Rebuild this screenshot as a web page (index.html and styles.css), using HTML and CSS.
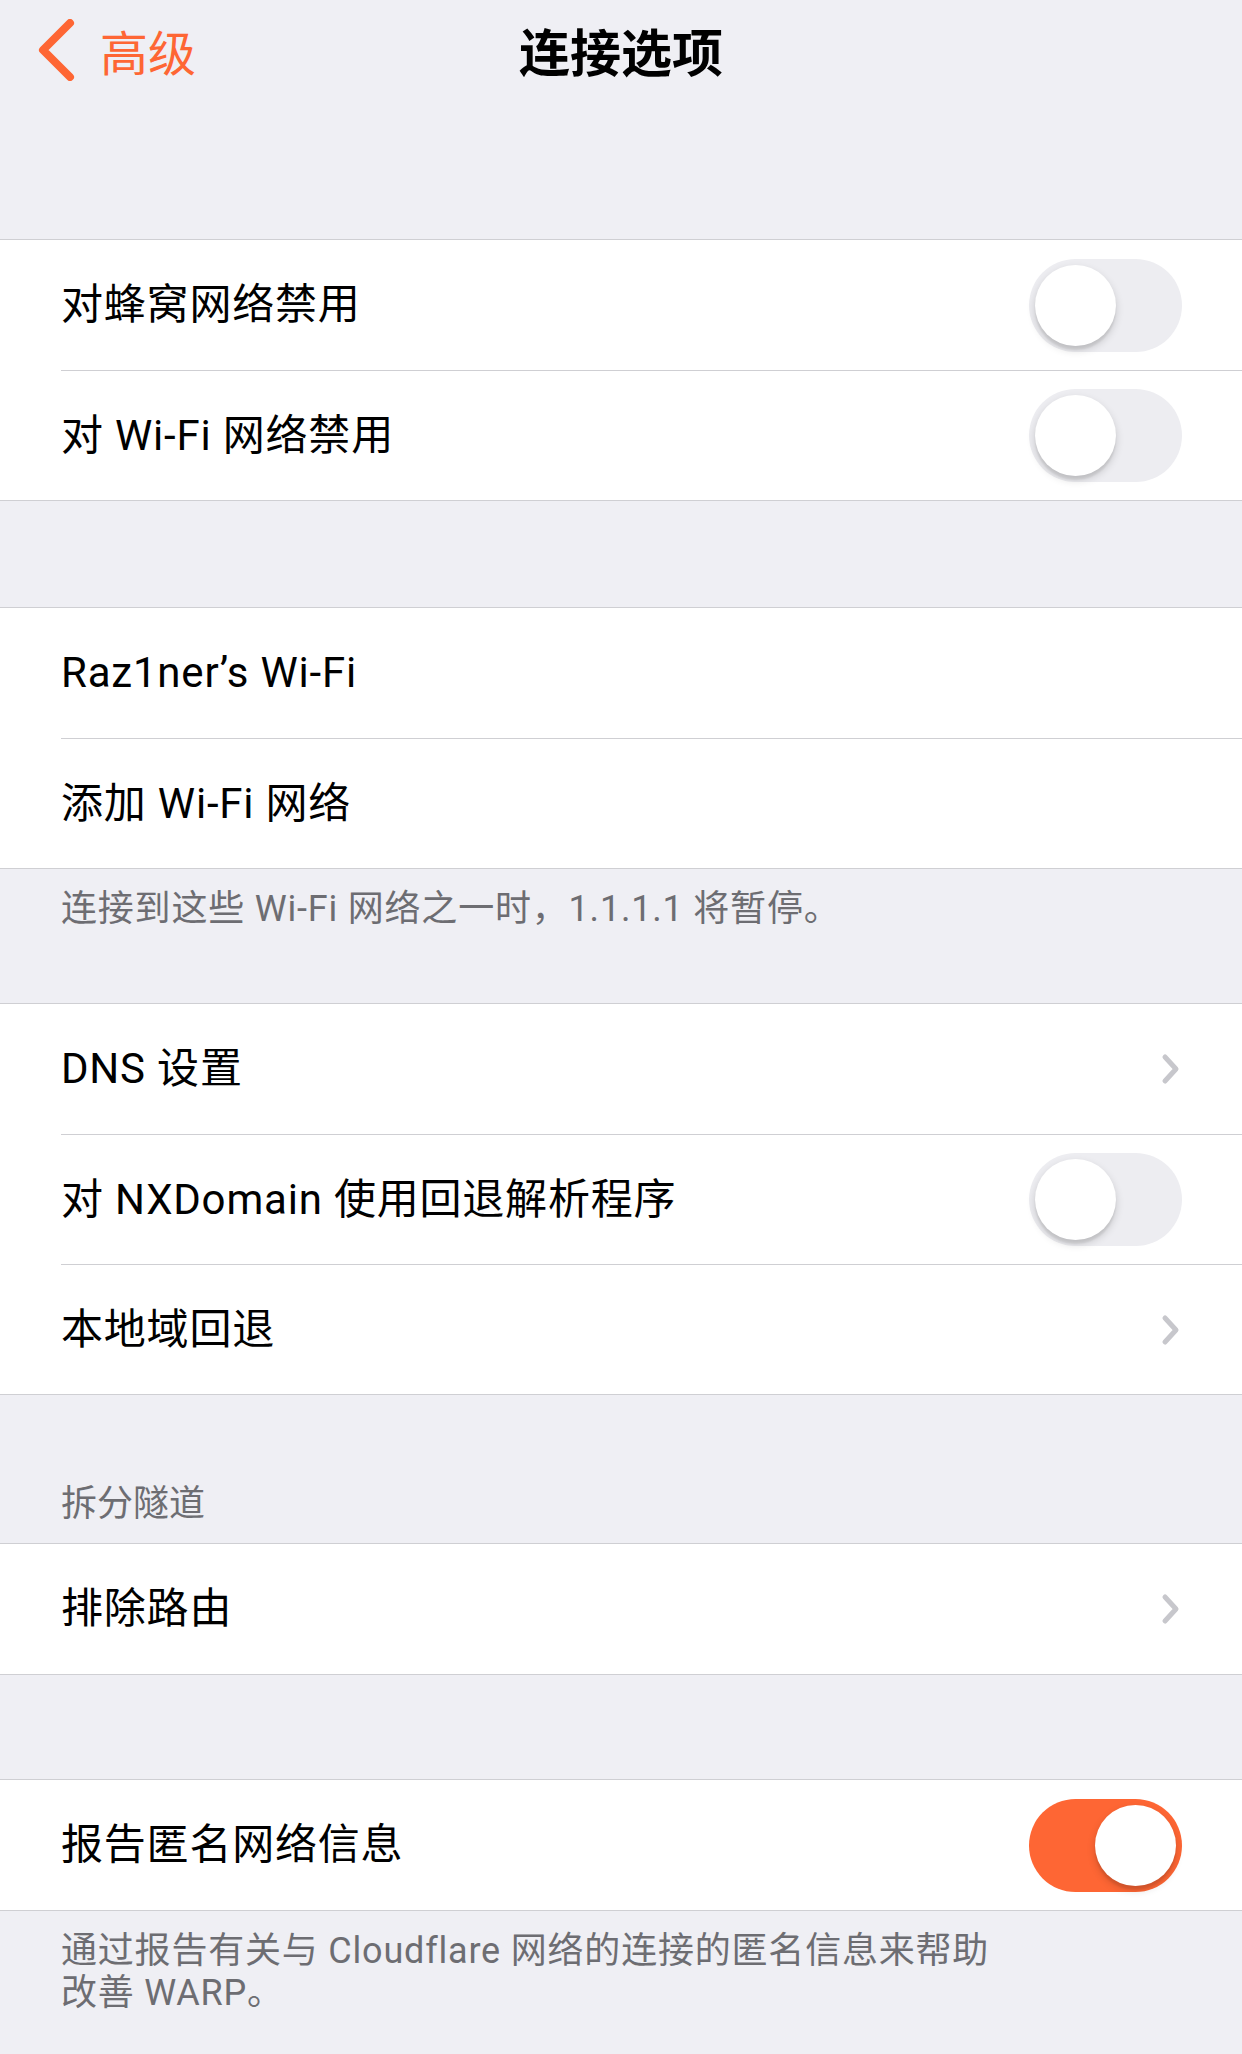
FILE: index.html
```html
<!DOCTYPE html>
<html lang="zh-CN">
<head>
<meta charset="utf-8">
<title>连接选项</title>
<link rel="stylesheet" href="styles.css">
</head>
<body>
<div class="screen">
  <header class="nav">
    <div class="nav-left">
      <svg class="back-chevron" width="40" height="62" viewBox="0 0 40 62"><polyline points="34,4 7,31 34,58" fill="none" stroke="#FE6634" stroke-width="8" stroke-linecap="round" stroke-linejoin="round"/></svg>
      <span class="back-label">高级</span>
    </div>
    <div class="nav-title">连接选项</div>
    <div class="nav-right"></div>
  </header>

  <section class="group g-first">
    <div class="row"><div class="row-inner"><span class="label">对蜂窝网络禁用</span><span class="switch"><span class="knob"></span></span></div></div>
    <div class="row"><div class="row-inner"><span class="label">对 Wi-Fi 网络禁用</span><span class="switch"><span class="knob"></span></span></div></div>
  </section>

  <section class="group g-gap">
    <div class="row"><div class="row-inner"><span class="label">Raz1ner’s Wi-Fi</span></div></div>
    <div class="row"><div class="row-inner"><span class="label">添加 Wi-Fi 网络</span></div></div>
  </section>
  <p class="footer f-1">连接到这些 Wi-Fi 网络之一时，1.1.1.1 将暂停。</p>

  <section class="group g-after-footer">
    <div class="row"><div class="row-inner"><span class="label">DNS 设置</span><svg class="chev" width="22" height="34" viewBox="0 0 22 34"><polyline points="5,5 16,17 5,29" fill="none" stroke="#C7C7CC" stroke-width="5" stroke-linecap="round" stroke-linejoin="round"/></svg></div></div>
    <div class="row"><div class="row-inner"><span class="label">对 NXDomain 使用回退解析程序</span><span class="switch"><span class="knob"></span></span></div></div>
    <div class="row"><div class="row-inner"><span class="label">本地域回退</span><svg class="chev" width="22" height="34" viewBox="0 0 22 34"><polyline points="5,5 16,17 5,29" fill="none" stroke="#C7C7CC" stroke-width="5" stroke-linecap="round" stroke-linejoin="round"/></svg></div></div>
  </section>

  <h2 class="section-header">拆分隧道</h2>
  <section class="group g-after-header">
    <div class="row"><div class="row-inner"><span class="label">排除路由</span><svg class="chev" width="22" height="34" viewBox="0 0 22 34"><polyline points="5,5 16,17 5,29" fill="none" stroke="#C7C7CC" stroke-width="5" stroke-linecap="round" stroke-linejoin="round"/></svg></div></div>
  </section>

  <section class="group g-gap g-last">
    <div class="row"><div class="row-inner"><span class="label">报告匿名网络信息</span><span class="switch on"><span class="knob"></span></span></div></div>
  </section>
  <p class="footer f-2">通过报告有关与 Cloudflare 网络的连接的匿名信息来帮助<br>改善 WARP。</p>
</div>
</body>
</html>
```

FILE: styles.css
```css
* { box-sizing: border-box; }

html, body {
  margin: 0;
  padding: 0;
  background: #EFEFF4;
}

body {
  font-family: Roboto, "Noto Sans CJK SC", sans-serif;
  color: #000;
  width: 1242px;
  min-height: 2054px;
}

.screen {
  display: flex;
  flex-direction: column;
}

.nav {
  height: 100px;
  display: grid;
  grid-template-columns: 1fr auto 1fr;
  align-items: center;
  margin-bottom: 139px;
}

.nav-left {
  display: flex;
  align-items: center;
  padding-left: 36px;
}

.back-chevron {
  display: block;
  flex: none;
}

.back-label {
  margin-left: 24px;
  font-size: 48px;
  line-height: 60px;
  color: #FE6634;
  font-family: "Noto Sans CJK SC", sans-serif;
}

.nav-title {
  font-family: "Noto Sans CJK SC", sans-serif;
  font-size: 51px;
  font-weight: 700;
  line-height: 60px;
  text-align: center;
}

.group {
  background: #fff;
  border-top: 1px solid #CFCFD3;
  border-bottom: 1px solid #CFCFD3;
}

.g-gap { margin-top: 106px; }
.g-last { margin-top: 104px; }
.g-after-footer { margin-top: 73px; }
.g-after-header { margin-top: 18px; }

.row {
  padding-left: 61px;
}

.row-inner {
  height: 130px;
  display: flex;
  align-items: center;
  justify-content: space-between;
  padding-right: 60px;
}

.row + .row .row-inner {
  border-top: 1px solid #CFCFD3;
}

.label {
  font-size: 42px;
  line-height: 52px;
  letter-spacing: 0.8px;
  white-space: nowrap;
}

.chev {
  display: block;
  flex: none;
}

.switch {
  position: relative;
  flex: none;
  width: 153px;
  height: 93px;
  border-radius: 47px;
  background: #EDEDF1;
}

.switch .knob {
  position: absolute;
  top: 6px;
  left: 6px;
  width: 81px;
  height: 81px;
  border-radius: 50%;
  background: #fff;
  box-shadow: 0 4px 8px rgba(0, 0, 0, 0.16), 0 4px 2px rgba(0, 0, 0, 0.07);
}

.switch.on {
  background: #FE6634;
}

.switch.on .knob {
  left: 66px;
}

.footer {
  margin: 0;
  padding: 19px 61px 0 61px;
  font-size: 36px;
  line-height: 42px;
  letter-spacing: 0.8px;
  color: #6D6D72;
}

.section-header {
  margin: 0;
  padding: 88px 61px 0 61px;
  font-size: 36px;
  line-height: 42px;
  font-weight: 400;
  color: #6D6D72;
}
```
